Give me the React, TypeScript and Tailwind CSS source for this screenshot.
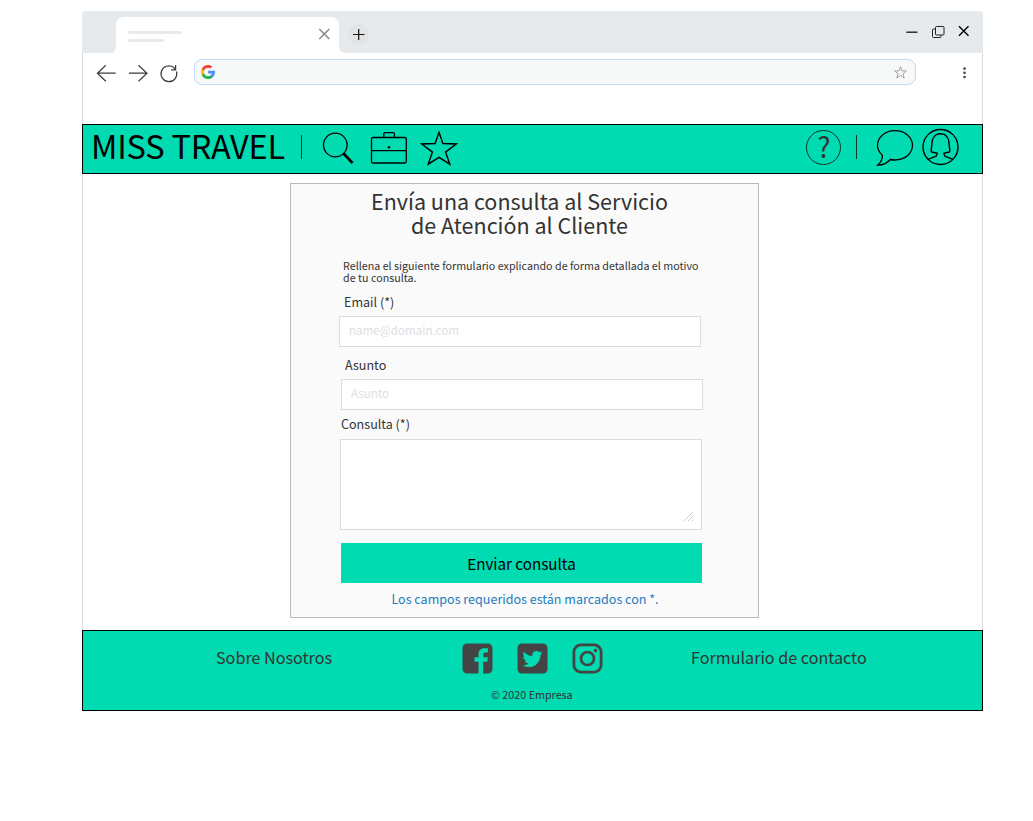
import React from "react";
import { FaTwitter } from "react-icons/fa";

function GoogleMark() {
  return (
    <svg width="14" height="14" viewBox="0 0 512 512">
      <path fill="#FBBB00" d="M113.47,309.408L95.648,375.94l-65.139,1.378C11.042,341.211,0,299.9,0,256c0-42.451,10.324-82.483,28.624-117.732h0.014l57.992,10.632l25.404,57.644c-5.317,15.501-8.215,32.141-8.215,49.456C103.821,274.792,107.225,292.797,113.47,309.408z" />
      <path fill="#518EF8" d="M507.527,208.176C510.467,223.662,512,239.655,512,256c0,18.328-1.927,36.206-5.598,53.451c-12.462,58.683-45.025,109.925-90.134,146.187l-0.014-0.014l-73.044-3.727l-10.338-64.535c29.932-17.554,53.324-45.025,65.646-77.911h-136.89V208.176h138.887L507.527,208.176z" />
      <path fill="#28B446" d="M416.253,455.624l0.014,0.014C372.396,490.901,316.666,512,256,512c-97.491,0-182.252-54.491-225.491-134.681l82.961-67.91c21.619,57.698,77.278,98.771,142.53,98.771c28.047,0,54.323-7.582,76.87-20.818L416.253,455.624z" />
      <path fill="#F14336" d="M419.404,58.936l-82.933,67.896c-23.335-14.586-50.919-23.012-80.471-23.012c-66.729,0-123.429,42.957-143.965,102.724l-83.397-68.276h-0.014C71.23,56.123,157.06,0,256,0C318.115,0,375.068,22.126,419.404,58.936z" />
    </svg>
  );
}

function TabStrip() {
  return (
    <div className="flex h-[42px] w-[901px]">
      <div className="w-[34px] rounded-tl-[3px] rounded-br-[6px] bg-[#e6eaed]" />
      <div className="w-[223px] bg-linear-to-b from-[#e6eaed] from-50% to-white to-50% pt-[6px]">
        <div className="flex h-[36px] justify-between rounded-t-[8px] bg-white pr-[9px] pl-[12px]">
          <div className="flex flex-col gap-[5px] pt-[14px]">
            <div className="h-[3px] w-[54px] rounded-full bg-[#e6eaea]" />
            <div className="h-[3px] w-[36px] rounded-full bg-[#e6eaea]" />
          </div>
          <svg className="mt-[11px]" width="12" height="12" fill="none" stroke="#858585" strokeWidth="1.4">
            <path d="M1.300 1 11.300 11M11.300 1 1.300 11" />
          </svg>
        </div>
      </div>
      <div className="flex flex-1 justify-between rounded-tr-[3px] rounded-bl-[6px] bg-[#e6eaed] pr-[13px] pl-[9px]">
        <div className="mt-[13px] flex h-[21px] w-[21px] items-center justify-center rounded-full bg-[#e2e3e4]">
          <svg width="13" height="13" fill="none" stroke="#111" strokeWidth="1.2">
            <path d="M6.700 1v11M1 6.500h11.500" />
          </svg>
        </div>
        <div className="flex pt-[13px]">
          <svg width="64" height="16" fill="none" stroke="#222" strokeWidth="1.2">
            <path d="M0.300 8.200h11.200" strokeWidth="1.4" />
            <rect x="29.5" y="2.5" width="8.5" height="8.5" rx="1" strokeWidth="1" />
            <path d="M29.5 5h-2a1 1 0 0 0-1 1v6.500a1 1 0 0 0 1 1h6.500a1 1 0 0 0 1-1v-1.500" strokeWidth="1" />
            <path d="M53 2.300l9.500 9.500M62.500 2.300l-9.500 9.500" stroke="#000" strokeWidth="1.400" />
          </svg>
        </div>
      </div>
    </div>
  );
}

function Toolbar() {
  return (
    <div className="flex h-[71px] border-x border-[#dcdcdc] pt-[6px] pl-[13px]">
      <svg width="98" height="28" fill="none" stroke="#3c3c3c" strokeWidth="1.2">
        <path d="M9.800 6.200 1.400 14.200 9.800 22.200M1.400 14.200h18.300" />
        <path d="M42.500 6.200 51 14.200 42.500 22.200M33 14.200h18" />
        <path d="M80.500 12.500A7.900 7.900 0 1 1 77.500 8.300L79.600 10.500" />
        <path d="M79.600 6v4.800h-4.500" />
      </svg>
      <div className="flex h-[26px] w-[722px] items-center justify-between rounded-[8px] border border-[#bfd8fb] bg-[#f7f9f9] pr-[8px] pl-[6px]">
        <GoogleMark />
        <svg width="13" height="13" viewBox="0 0 13 13" fill="none" stroke="#999" strokeWidth="0.9">
          <path d="M6.500 0.800 8 4.800l4.300.2-3.300 2.700 1.200 4.300-3.700-2.500-3.700 2.500 1.200-4.300L.7 5 5 4.800z" />
        </svg>
      </div>
      <svg className="mt-[7px] ml-[46px]" width="5" height="14" fill="#444">
        <circle cx="2.500" cy="2.600" r="1.300" />
        <circle cx="2.500" cy="6.800" r="1.300" />
        <circle cx="2.500" cy="11" r="1.300" />
      </svg>
    </div>
  );
}

function Divider() {
  return <div className="mt-[10px] h-[24px] w-px bg-[#07352b]" />;
}

function SiteHeader() {
  return (
    <header className="flex h-[50px] justify-between border border-black bg-[#00dbb2] pr-[23px] pl-[8px] text-black">
      <div className="flex">
        <div className="w-[210px] text-[32.500px] leading-[40px] tracking-[-0.200px] whitespace-nowrap">MISS TRAVEL</div>
        <Divider />
        <svg className="mt-[6px] ml-[20px]" width="32" height="34" fill="none" stroke="#000">
          <circle cx="13.300" cy="14" r="11.800" strokeWidth="1.300" />
          <path d="M21.500 22.500 30.500 32" strokeWidth="2.700" />
        </svg>
        <svg className="mt-[6px] ml-[16px]" width="38" height="34" fill="none" stroke="#000" strokeWidth="1.300">
          <rect x="1.500" y="6.500" width="34.800" height="25.500" rx="1.500" />
          <path d="M13.800 6.500V3a1.300 1.300 0 0 1 1.300-1.300h8a1.300 1.300 0 0 1 1.300 1.300v3.500M1.500 19.700h34.800" />
          <circle cx="19" cy="16.200" r="1.300" fill="#000" stroke="none" />
        </svg>
        <svg className="mt-[6px] ml-[12px]" width="38" height="36" fill="none" stroke="#000" strokeWidth="1.400">
          <path d="M19 1.300 22.900 12.500 36.200 13 25.600 21.100 29.800 33.200 19 26.300 8.200 33.200 12.400 21.100 1.700 13 15.100 12.500z" />
        </svg>
      </div>
      <div className="flex">
        <div className="mt-[5px] h-[35px] w-[35px] rounded-full border border-[#12332c] pl-px text-center text-[28px] leading-[31px] text-[#333]">?</div>
        <div className="ml-[15px]">
          <Divider />
        </div>
        <svg className="mt-[3px] ml-[19px]" width="38" height="39" fill="none" stroke="#000" strokeWidth="1.300">
          <path d="M6.300 27.300C3.400 24.500 1.500 21 1.500 17.300 1.500 9 9.300 2.700 19 2.700S36.500 9 36.500 17.300 28.700 32 19 32c-1.700 0-3.300-.2-4.800-.5C11 35.500 6.500 37 1.700 37.200c3-2.700 4.800-6.400 4.600-9.900z" />
        </svg>
        <svg className="mt-[3px] ml-[7px]" width="38" height="39" fill="none" stroke="#000" strokeWidth="1.400" strokeLinejoin="round">
          <circle cx="19.500" cy="19" r="17.500" />
          <path d="M7 31.300 15.200 28.100 16.200 25.100 11.500 24.300C9 24 10.800 20 10.900 16 11 10 14 5.800 19.500 5.800S28 10 28.100 16c.1 4 1.900 8-.6 8.300l-4.700.8 1 3L32 31.300" />
        </svg>
      </div>
    </header>
  );
}

function ContactForm() {
  return (
    <form className="mx-auto ml-[207px] h-[435px] w-[469px] border border-[#b9b9b9] bg-[#fafafa] text-[12.550px] leading-[16px] text-[#333]">
      <h1 className="pt-[5px] pr-[10px] text-center text-[21.500px] leading-[24px]">
        Envía una consulta al Servicio
        <br />
        de Atención al Cliente
      </h1>
      <p className="mt-[23px] ml-[52px] text-[10.720px] leading-[12px] whitespace-nowrap">
        Rellena el siguiente formulario explicando de forma detallada el motivo
        <br />
        de tu consulta.
      </p>
      <label className="mt-[10px] ml-[53px] block">Email (*)</label>
      <input
        className="mt-[6px] ml-[48px] block h-[31px] w-[362px] border border-[#dcdcdc] bg-white pr-2 pb-[4px] pl-[9px] text-[11.600px] placeholder:text-[#dedede]"
        placeholder="name@domain.com"
      />
      <label className="mt-[10px] ml-[54px] block">Asunto</label>
      <input
        className="mt-[6px] ml-[50px] block h-[31px] w-[362px] border border-[#dcdcdc] bg-white pr-2 pb-[4px] pl-[9px] text-[11.600px] placeholder:text-[#dedede]"
        placeholder="Asunto"
      />
      <label className="mt-[6px] ml-[50px] block">Consulta (*)</label>
      <div className="mt-[7px] ml-[49px] flex h-[91px] w-[362px] items-end justify-end border border-[#dcdcdc] bg-white pr-[7px] pb-[7px]">
        <svg width="11" height="11" fill="none" stroke="#c8c8c8" strokeWidth="0.900">
          <path d="M1 10 10 1M5 10l5-5M9 10l1-1" />
        </svg>
      </div>
      <button type="button" className="mt-[13px] ml-[50px] block h-[40px] w-[361px] bg-[#00dbb2] text-[15.200px] text-black">
        Enviar consulta
      </button>
      <p className="mt-[8px] pl-px text-center text-[#1f7bbd]">Los campos requeridos están marcados con *.</p>
    </form>
  );
}

function SiteFooter() {
  return (
    <footer className="h-[81px] border border-black bg-[#00dbb2] text-[16.150px] leading-[22px] text-[#333]">
      <div className="flex h-[56px] pt-[12px]">
        <div className="ml-[133px] w-[246px] pt-[3px] whitespace-nowrap">Sobre Nosotros</div>
        <div className="flex w-[229px] gap-[24px]">
          <svg width="31" height="31">
            <path
              fill="#444"
              fillRule="evenodd"
              d="M5 0.500H26A4.500 4.500 0 0 1 30.500 5V26A4.500 4.500 0 0 1 26 30.500H21.200V18.700H25.200L25.800 14.200H21.200V11.500C21.200 10.100 21.800 9.400 23.300 9.400H25.900V5.200H22.300C18.400 5.200 16.500 7.400 16.500 11V14.200H12.500V18.700H16.500V30.500H5A4.500 4.500 0 0 1 .5 26V5A4.500 4.500 0 0 1 5 .5z"
            />
          </svg>
          <svg width="31" height="31">
            <rect x="0.500" y="0.500" width="30" height="30" rx="4.500" fill="#444" />
            <FaTwitter x="5.500" y="6" size={20} color="#00dbb2" />
          </svg>
          <svg width="31" height="31" fill="none" stroke="#444">
            <rect x="1.900" y="1.900" width="27.200" height="27.200" rx="7" strokeWidth="2.800" />
            <circle cx="15.500" cy="15.500" r="6.500" strokeWidth="2.700" />
            <circle cx="23.500" cy="7.600" r="1.800" fill="#444" stroke="none" />
          </svg>
        </div>
        <div className="pt-[3px] whitespace-nowrap">Formulario de contacto</div>
      </div>
      <div className="ml-[408px] text-[10.750px] leading-[16px]">© 2020 Empresa</div>
    </footer>
  );
}

export default function App() {
  return (
    <div className="h-[821px] w-[1033px] bg-white pt-[11px] pl-[82px] font-['Noto_Sans_CJK_SC',sans-serif]">
      <div className="w-[901px]">
        <TabStrip />
        <Toolbar />
        <SiteHeader />
        <main className="h-[456px] border-x border-[#dcdcdc] pt-[9px]">
          <ContactForm />
        </main>
        <SiteFooter />
      </div>
    </div>
  );
}
